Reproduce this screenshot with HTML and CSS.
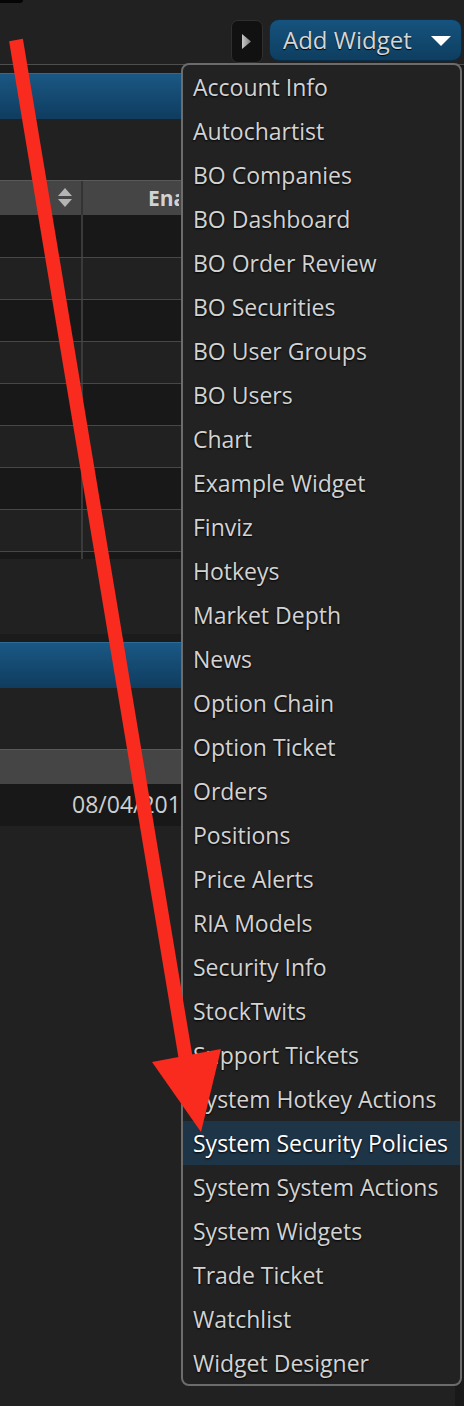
FILE: index.html
```html
<!DOCTYPE html>
<html lang="en">
<head>
<meta charset="utf-8">
<title>Add Widget</title>
<link rel="stylesheet" href="styles.css">
</head>
<body>
<div class="page">
  <div class="corner-tab"></div>
  <header class="toolbar">
    <button class="nav-btn" type="button" aria-label="Next">
      <svg width="10" height="15" viewBox="0 0 10 15"><defs><linearGradient id="g1" x1="0" y1="0" x2="1" y2="0"><stop offset="0" stop-color="#c8c8c8"/><stop offset="1" stop-color="#7a7a7a"/></linearGradient></defs><polygon points="0,0 9,7.5 0,15" fill="url(#g1)"/></svg>
    </button>
    <button class="add-btn" type="button">
      <span>Add Widget</span>
      <svg width="20" height="10" viewBox="0 0 20 10"><polygon points="0,0 20,0 10,10" fill="#ffffff"/></svg>
    </button>
  </header>

  <div class="workspace">
    <div class="main">
      <section class="widget">
        <div class="widget-cap"></div>
        <div class="widget-title"></div>
        <div class="widget-body">
          <div class="grid grid-a">
            <div class="thead">
              <div class="th c1">
                <svg class="sort" width="14" height="20" viewBox="0 0 14 20"><polygon points="7,0 14,8 0,8" fill="#b4b4b4"/><polygon points="0,11 14,11 7,19" fill="#b4b4b4"/></svg>
              </div>
              <div class="th c2">Enabled</div>
            </div>
            <div class="row"><div class="td c1"></div><div class="td c2"></div></div>
            <div class="row"><div class="td c1"></div><div class="td c2"></div></div>
            <div class="row"><div class="td c1"></div><div class="td c2"></div></div>
            <div class="row"><div class="td c1"></div><div class="td c2"></div></div>
            <div class="row"><div class="td c1"></div><div class="td c2"></div></div>
            <div class="row"><div class="td c1"></div><div class="td c2"></div></div>
            <div class="row"><div class="td c1"></div><div class="td c2"></div></div>
            <div class="row"><div class="td c1"></div><div class="td c2"></div></div>
            <div class="row"><div class="td c1"></div><div class="td c2"></div></div>
          </div>
        </div>
      </section>

      <section class="widget">
        <div class="widget-cap"></div>
        <div class="widget-title"></div>
        <div class="widget-body">
          <div class="grid grid-b">
            <div class="thead"><div class="th wide"></div></div>
            <div class="row"><div class="td date"><span class="date-text">08/04/2018</span></div></div>
          </div>
        </div>
      </section>
    </div>
    <div class="scrollbar"></div>
  </div>

  <ul class="menu">
    <li>Account Info</li>
    <li>Autochartist</li>
    <li>BO Companies</li>
    <li>BO Dashboard</li>
    <li>BO Order Review</li>
    <li>BO Securities</li>
    <li>BO User Groups</li>
    <li>BO Users</li>
    <li>Chart</li>
    <li>Example Widget</li>
    <li>Finviz</li>
    <li>Hotkeys</li>
    <li>Market Depth</li>
    <li>News</li>
    <li>Option Chain</li>
    <li>Option Ticket</li>
    <li>Orders</li>
    <li>Positions</li>
    <li>Price Alerts</li>
    <li>RIA Models</li>
    <li>Security Info</li>
    <li>StockTwits</li>
    <li>Support Tickets</li>
    <li>System Hotkey Actions</li>
    <li class="active">System Security Policies</li>
    <li>System System Actions</li>
    <li>System Widgets</li>
    <li>Trade Ticket</li>
    <li>Watchlist</li>
    <li>Widget Designer</li>
  </ul>

  <svg class="annotation" width="464" height="1406" viewBox="0 0 464 1406">
    <line x1="16" y1="40" x2="186" y2="1060" stroke="#f92a1e" stroke-width="14" stroke-linecap="butt"/>
    <polygon points="152,1062 221,1049 201,1132" fill="#f92a1e"/>
  </svg>
</div>
</body>
</html>
```

FILE: styles.css
```css
* { box-sizing: border-box; }

html, body {
  margin: 0;
  padding: 0;
}

body {
  width: 464px;
  height: 1406px;
  overflow: hidden;
  background: #212121;
  font-family: "Open Sans", "Noto Sans", sans-serif;
}

.page {
  position: relative;
  height: 1406px;
  overflow: hidden;
}

.corner-tab {
  position: absolute;
  left: 0;
  top: 0;
  width: 23px;
  height: 3px;
  background: #050505;
  border-bottom-right-radius: 3px;
}

/* Toolbar */
.toolbar {
  height: 64px;
  display: flex;
  justify-content: flex-end;
  align-items: flex-start;
  gap: 6px;
  padding: 19px 2px 0 0;
}

.nav-btn {
  width: 32px;
  height: 43px;
  margin-top: 1px;
  padding: 0;
  background: #111111;
  border: 1px solid #2f2f2f;
  border-radius: 7px;
  display: flex;
  align-items: center;
  justify-content: center;
}

.add-btn {
  width: 193px;
  height: 42px;
  padding: 0 10px 0 13px;
  background: linear-gradient(#15537e, #0e3e60);
  border: 1px solid #0a2c45;
  border-radius: 10px;
  display: flex;
  align-items: center;
  justify-content: space-between;
  color: #d6d6d6;
  font-family: "Open Sans", "Noto Sans", sans-serif;
  font-size: 24px;
  line-height: 1;
  text-shadow: 0 1px 1px #000;
}

.add-btn span { margin-top: -1px; }
.add-btn svg { margin-top: 2px; }

/* Workspace */
.workspace {
  display: flex;
  height: 1342px;
  border-top: 1px solid #4e4e4e;
}

.main {
  flex: 1;
  min-width: 0;
  overflow: hidden;
}

.scrollbar {
  width: 9px;
  background: #191919;
}

.widget-cap {
  height: 8px;
  background: #1b1b1b;
}

.widget-title {
  height: 46px;
  background: linear-gradient(#1a5884, #0f3c5f);
  border-top: 1px solid #2d6b97;
}

.widget-body {
  padding-top: 61px;
  padding-bottom: 75px;
}

.grid-a {
  height: 379px;
  overflow: hidden;
}

.thead {
  display: flex;
  height: 35px;
  background: #454545;
  border-top: 1px solid #595959;
}

.row {
  display: flex;
  height: 42px;
  background: #181818;
  border-top: 1px solid #474747;
}

.row:nth-child(odd) {
  background: #212121;
}

.row:nth-child(2) { border-top: 0; }

.th, .td {
  height: 100%;
}

.c1 {
  width: 83px;
  flex: none;
  border-right: 2px solid #333333;
}

.td.c1 { border-right-color: #3a3a3a; }

.th.c1 {
  display: flex;
  align-items: center;
  justify-content: flex-end;
  padding-right: 9px;
}

.th.c2 {
  width: 96px;
  flex: none;
  overflow: hidden;
  white-space: nowrap;
  padding-left: 65px;
  line-height: 34px;
  font-size: 21px;
  font-weight: bold;
  color: #d2d2d2;
}

.td.c2 { flex: 1; }

.th.wide { flex: 1; }

.td.date {
  width: 181px;
  overflow: hidden;
  white-space: nowrap;
  padding-left: 72px;
  line-height: 41px;
  font-size: 23px;
  color: #cfcfcf;
}

/* Dropdown menu */
.menu {
  position: absolute;
  left: 181px;
  top: 63px;
  width: 281px;
  height: 1323px;
  margin: 0;
  padding: 0;
  list-style: none;
  background: #222222;
  border: 2px solid #6c6c6c;
  border-radius: 8px;
  overflow: hidden;
}

.menu li {
  height: 44px;
  line-height: 44px;
  padding-left: 10px;
  color: #d3d3d3;
  font-size: 23px;
  white-space: nowrap;
  text-shadow: 0 1px 2px #000;
}

.menu li.active {
  background: #1e3447;
  color: #ffffff;
}

/* Annotation arrow overlay */
.annotation {
  position: absolute;
  left: 0;
  top: 0;
  pointer-events: none;
}
```
